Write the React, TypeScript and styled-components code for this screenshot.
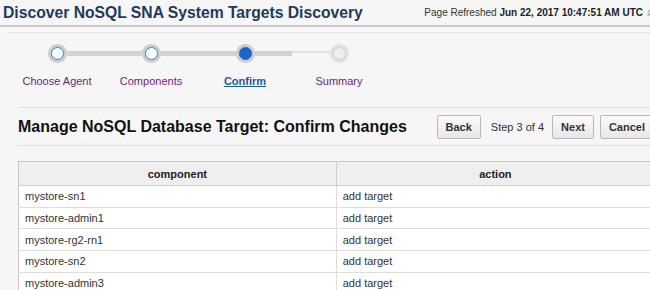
import React from 'react';
import styled, { createGlobalStyle } from 'styled-components';
import { RefreshCw } from 'lucide-react';

const GlobalStyle = createGlobalStyle`
  html, body {
    margin: 0;
    padding: 0;
    background: #f6f6f6;
    overflow: hidden;
  }
  body {
    font-family: 'Liberation Sans', Arial, sans-serif;
    color: #333;
  }
`;

const Page = styled.div`
  width: 660px;
  display: flex;
  flex-direction: column;
`;

const Header = styled.div`
  height: 25px;
  display: flex;
  align-items: center;
  padding: 0 4px 0 3px;
  border-bottom: 2px solid #c9c9c9;
`;

const AppTitle = styled.h1`
  margin: 0;
  font-size: 15.7px;
  font-weight: bold;
  color: #1d3a5c;
`;

const Refreshed = styled.div`
  margin-left: auto;
  display: flex;
  align-items: center;
  gap: 4px;
  font-size: 10px;
  color: #333;

  b {
    font-weight: bold;
    color: #222;
  }
`;

const Spacer = styled.div`
  height: 5px;
`;

const SubRule = styled.div<{ inset: number }>`
  height: 1px;
  background: #e3e3e3;
  margin-left: ${({ inset }) => inset}px;
`;

const Train = styled.div`
  display: grid;
  grid-template-columns: repeat(4, 94px);
  margin: 10px 0 0 10px;
  height: 64px;
`;

const Stop = styled.div`
  display: flex;
  flex-direction: column;
  align-items: stretch;
`;

const Track = styled.div`
  display: flex;
  align-items: center;
  height: 20px;
`;

const Segment = styled.div<{ kind: 'none' | 'thick' | 'thin' }>`
  flex: 1;
  height: ${({ kind }) => (kind === 'thin' ? '2px' : '5px')};
  margin-top: ${({ kind }) => (kind === 'thin' ? '-3px' : '0')};
  background: ${({ kind }) =>
    kind === 'thick' ? '#d3d3d3' : kind === 'thin' ? '#e0e0e0' : 'transparent'};
`;

const Halo = styled.div<{ muted: boolean }>`
  width: 19px;
  height: 19px;
  border-radius: 50%;
  background: ${({ muted }) => (muted ? '#e2e2e2' : '#cdcdcd')};
  display: flex;
  align-items: center;
  justify-content: center;
  flex: none;
`;

const Dot = styled.div<{ state: 'done' | 'current' | 'todo' }>`
  width: 13px;
  height: 13px;
  border-radius: 50%;
  box-sizing: border-box;
  background: ${({ state }) =>
    state === 'current' ? '#1767cc' : state === 'done' ? '#fff' : '#efefef'};
  border: 1.5px solid
    ${({ state }) => (state === 'todo' ? '#cfcfcf' : state === 'current' ? '#1767cc' : '#3f7dc4')};
`;

const StopLabel = styled.a<{ current: boolean }>`
  margin-top: 11px;
  text-align: center;
  font-size: 11px;
  line-height: 14px;
  white-space: nowrap;
  color: ${({ current }) => (current ? '#1b5a9c' : '#6c1f7a')};
  font-weight: ${({ current }) => (current ? 'bold' : 'normal')};
  text-decoration: ${({ current }) => (current ? 'underline' : 'none')};
`;

const Content = styled.div`
  margin-left: 18px;
  width: 636px;
  display: flex;
  flex-direction: column;
`;

const Rule = styled.div`
  height: 1px;
  background: #e0e0e0;
`;

const TitleBar = styled.div`
  height: 37px;
  display: flex;
  align-items: center;
`;

const PageTitle = styled.h2`
  margin: 0;
  font-size: 16px;
  font-weight: bold;
  color: #111;
`;

const Actions = styled.div`
  margin-left: auto;
  display: flex;
  align-items: center;
`;

const Button = styled.button`
  height: 24px;
  padding: 0 8px;
  margin-left: 6px;
  border: 1px solid #b9b9b9;
  border-radius: 2px;
  background: linear-gradient(#fbfbfb, #e7e7e7);
  font-family: 'Liberation Sans', Arial, sans-serif;
  font-size: 11px;
  font-weight: bold;
  color: #333;
`;

const StepText = styled.span`
  font-size: 11px;
  color: #333;
  margin: 0 2px 0 10px;
`;

const Table = styled.table`
  margin-top: 15px;
  width: 636px;
  border-collapse: collapse;
  table-layout: fixed;
  border-left: 1px solid #c6c6c6;
  border-top: 1px solid #c6c6c6;
`;

const HeadCell = styled.th`
  height: 23px;
  padding: 0;
  background: #efefef;
  font-size: 11px;
  font-weight: bold;
  color: #222;
  text-align: center;
  border-bottom: 1px solid #cfcfcf;
  & + & {
    border-left: 1px solid #cfcfcf;
  }
`;

const Cell = styled.td`
  height: 20.7px;
  padding: 0 6px;
  background: #fff;
  font-size: 11px;
  color: #333;
  border-bottom: 1px solid #dedede;
  & + & {
    border-left: 1px solid #dedede;
  }
`;

const steps: { label: string; state: 'done' | 'current' | 'todo' }[] = [
  { label: 'Choose Agent', state: 'done' },
  { label: 'Components', state: 'done' },
  { label: 'Confirm', state: 'current' },
  { label: 'Summary', state: 'todo' },
];

const rows = ['mystore-sn1', 'mystore-admin1', 'mystore-rg2-rn1', 'mystore-sn2', 'mystore-admin3'];

const App: React.FC = () => {
  return (
    <Page>
      <GlobalStyle />
      <Header>
        <AppTitle>Discover NoSQL SNA System Targets Discovery</AppTitle>
        <Refreshed>
          <span>
            Page Refreshed <b>Jun 22, 2017 10:47:51 AM UTC</b>
          </span>
          <RefreshCw size={9} color="#999" />
        </Refreshed>
      </Header>
      <Spacer />
      <SubRule inset={8} />
      <Train>
        {steps.map((s, i) => {
          const left = i === 0 ? 'none' : steps[i].state === 'todo' ? 'thin' : 'thick';
          const right = i === steps.length - 1 ? 'none' : 'thick';
          return (
            <Stop key={s.label}>
              <Track>
                <Segment kind={left} />
                <Halo muted={s.state === 'todo'}>
                  <Dot state={s.state} />
                </Halo>
                <Segment kind={right} />
              </Track>
              <StopLabel current={s.state === 'current'}>{s.label}</StopLabel>
            </Stop>
          );
        })}
      </Train>
      <Content>
        <Rule />
        <TitleBar>
          <PageTitle>Manage NoSQL Database Target: Confirm Changes</PageTitle>
          <Actions>
            <Button>Back</Button>
            <StepText>Step 3 of 4</StepText>
            <Button>Next</Button>
            <Button>Cancel</Button>
          </Actions>
        </TitleBar>
        <Rule />
        <Table>
          <thead>
            <tr>
              <HeadCell>component</HeadCell>
              <HeadCell>action</HeadCell>
            </tr>
          </thead>
          <tbody>
            {rows.map((r) => (
              <tr key={r}>
                <Cell>{r}</Cell>
                <Cell>add target</Cell>
              </tr>
            ))}
          </tbody>
        </Table>
      </Content>
    </Page>
  );
};

export default App;
